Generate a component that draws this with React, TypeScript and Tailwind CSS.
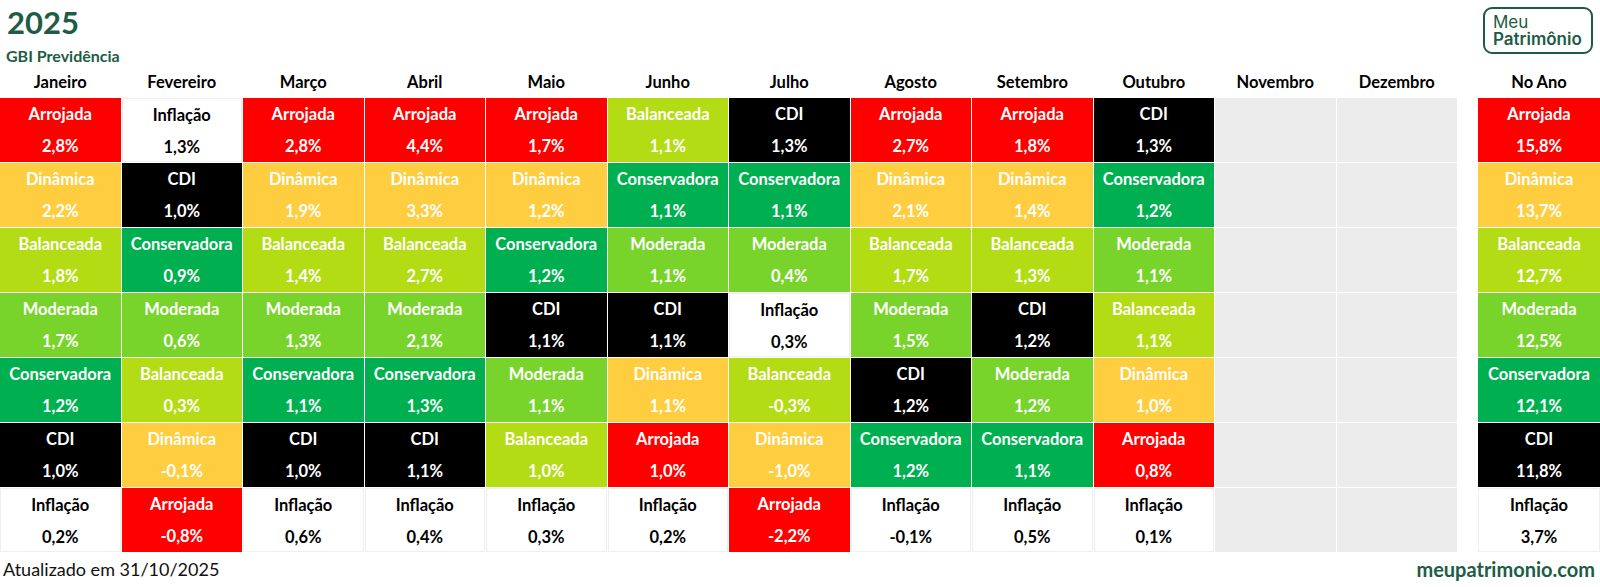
import React from "react";

type Fund =
  | "Arrojada"
  | "Dinâmica"
  | "Balanceada"
  | "Moderada"
  | "Conservadora"
  | "CDI"
  | "Inflação";

type Entry = [Fund, string];

const fundStyle: Record<Fund, string> = {
  Arrojada: "bg-[#ff0000] text-white",
  Dinâmica: "bg-[#ffcd40] text-white",
  Balanceada: "bg-[#b4dc14] text-white",
  Moderada: "bg-[#78d42a] text-white",
  Conservadora: "bg-[#00b050] text-white",
  CDI: "bg-black text-white",
  Inflação: "bg-white text-black border border-[#efefef]",
};

const months = [
  "Janeiro",
  "Fevereiro",
  "Março",
  "Abril",
  "Maio",
  "Junho",
  "Julho",
  "Agosto",
  "Setembro",
  "Outubro",
  "Novembro",
  "Dezembro",
];

// one array per month, ranked best to worst
const ranking: (Entry[] | null)[] = [
  [["Arrojada", "2,8%"], ["Dinâmica", "2,2%"], ["Balanceada", "1,8%"], ["Moderada", "1,7%"], ["Conservadora", "1,2%"], ["CDI", "1,0%"], ["Inflação", "0,2%"]],
  [["Inflação", "1,3%"], ["CDI", "1,0%"], ["Conservadora", "0,9%"], ["Moderada", "0,6%"], ["Balanceada", "0,3%"], ["Dinâmica", "-0,1%"], ["Arrojada", "-0,8%"]],
  [["Arrojada", "2,8%"], ["Dinâmica", "1,9%"], ["Balanceada", "1,4%"], ["Moderada", "1,3%"], ["Conservadora", "1,1%"], ["CDI", "1,0%"], ["Inflação", "0,6%"]],
  [["Arrojada", "4,4%"], ["Dinâmica", "3,3%"], ["Balanceada", "2,7%"], ["Moderada", "2,1%"], ["Conservadora", "1,3%"], ["CDI", "1,1%"], ["Inflação", "0,4%"]],
  [["Arrojada", "1,7%"], ["Dinâmica", "1,2%"], ["Conservadora", "1,2%"], ["CDI", "1,1%"], ["Moderada", "1,1%"], ["Balanceada", "1,0%"], ["Inflação", "0,3%"]],
  [["Balanceada", "1,1%"], ["Conservadora", "1,1%"], ["Moderada", "1,1%"], ["CDI", "1,1%"], ["Dinâmica", "1,1%"], ["Arrojada", "1,0%"], ["Inflação", "0,2%"]],
  [["CDI", "1,3%"], ["Conservadora", "1,1%"], ["Moderada", "0,4%"], ["Inflação", "0,3%"], ["Balanceada", "-0,3%"], ["Dinâmica", "-1,0%"], ["Arrojada", "-2,2%"]],
  [["Arrojada", "2,7%"], ["Dinâmica", "2,1%"], ["Balanceada", "1,7%"], ["Moderada", "1,5%"], ["CDI", "1,2%"], ["Conservadora", "1,2%"], ["Inflação", "-0,1%"]],
  [["Arrojada", "1,8%"], ["Dinâmica", "1,4%"], ["Balanceada", "1,3%"], ["CDI", "1,2%"], ["Moderada", "1,2%"], ["Conservadora", "1,1%"], ["Inflação", "0,5%"]],
  [["CDI", "1,3%"], ["Conservadora", "1,2%"], ["Moderada", "1,1%"], ["Balanceada", "1,1%"], ["Dinâmica", "1,0%"], ["Arrojada", "0,8%"], ["Inflação", "0,1%"]],
  null,
  null,
];

const noAno: Entry[] = [
  ["Arrojada", "15,8%"],
  ["Dinâmica", "13,7%"],
  ["Balanceada", "12,7%"],
  ["Moderada", "12,5%"],
  ["Conservadora", "12,1%"],
  ["CDI", "11,8%"],
  ["Inflação", "3,7%"],
];

const rows = [0, 1, 2, 3, 4, 5, 6];

const Cell = ({ entry }: { entry: Entry | null }) => {
  if (!entry) return <div className="h-[64px] bg-[#ececec]" />;
  const [fund, value] = entry;
  return (
    <div
      className={`h-[64px] flex flex-col items-center pt-[6px] gap-[12px] text-[16.5px] font-bold leading-[20px] ${fundStyle[fund]}`}
    >
      <span>{fund}</span>
      <span>{value}</span>
    </div>
  );
};

const Logo = () => (
  <div className="mt-[7px] mr-[7px] w-[110px] h-[47px] border-2 border-[#1d5c45] rounded-[9px] flex flex-col justify-center pl-[8px] text-[#1d5c45] font-['Inter',sans-serif] text-[17px] leading-[17px]">
    <span className="font-normal">Meu</span>
    <span className="font-semibold">Patrimônio</span>
  </div>
);

export default function App() {
  return (
    <div className="w-[1600px] h-[587px] bg-white overflow-hidden font-['Lato',sans-serif] text-black">
      <div className="flex justify-between h-[66px]">
        <div className="pl-[7px] pt-[4px] text-[#1d5c45] font-bold">
          <div className="text-[31px] leading-[36px]">2025</div>
          <div className="mt-[7px] text-[16px] leading-[18px] -ml-[1px]">GBI Previdência</div>
        </div>
        <Logo />
      </div>

      <div className="flex justify-between">
        <div className="w-[1457px]">
          <div className="grid grid-cols-12 gap-x-px h-[32px] pt-[6px]">
            {months.map((m) => (
              <div key={m} className="text-center text-[16.5px] font-bold leading-[20px]">
                {m}
              </div>
            ))}
          </div>
          <div className="grid grid-cols-12 gap-px bg-white">
            {rows.map((r) =>
              ranking.map((col, i) => (
                <Cell key={`${r}-${i}`} entry={col ? col[r] : null} />
              ))
            )}
          </div>
        </div>

        <div className="w-[122px]">
          <div className="h-[32px] pt-[6px] text-center text-[16.5px] font-bold leading-[20px]">
            No Ano
          </div>
          <div className="flex flex-col gap-px">
            {noAno.map((e) => (
              <Cell key={e[0]} entry={e} />
            ))}
          </div>
        </div>
      </div>

      <div className="flex justify-between items-center h-[34px] pl-[3px] pr-[5px]">
        <span className="text-[18px] text-[#111]">Atualizado em 31/10/2025</span>
        <span className="text-[20px] font-bold text-[#1d5c45]">meupatrimonio.com</span>
      </div>
    </div>
  );
}
